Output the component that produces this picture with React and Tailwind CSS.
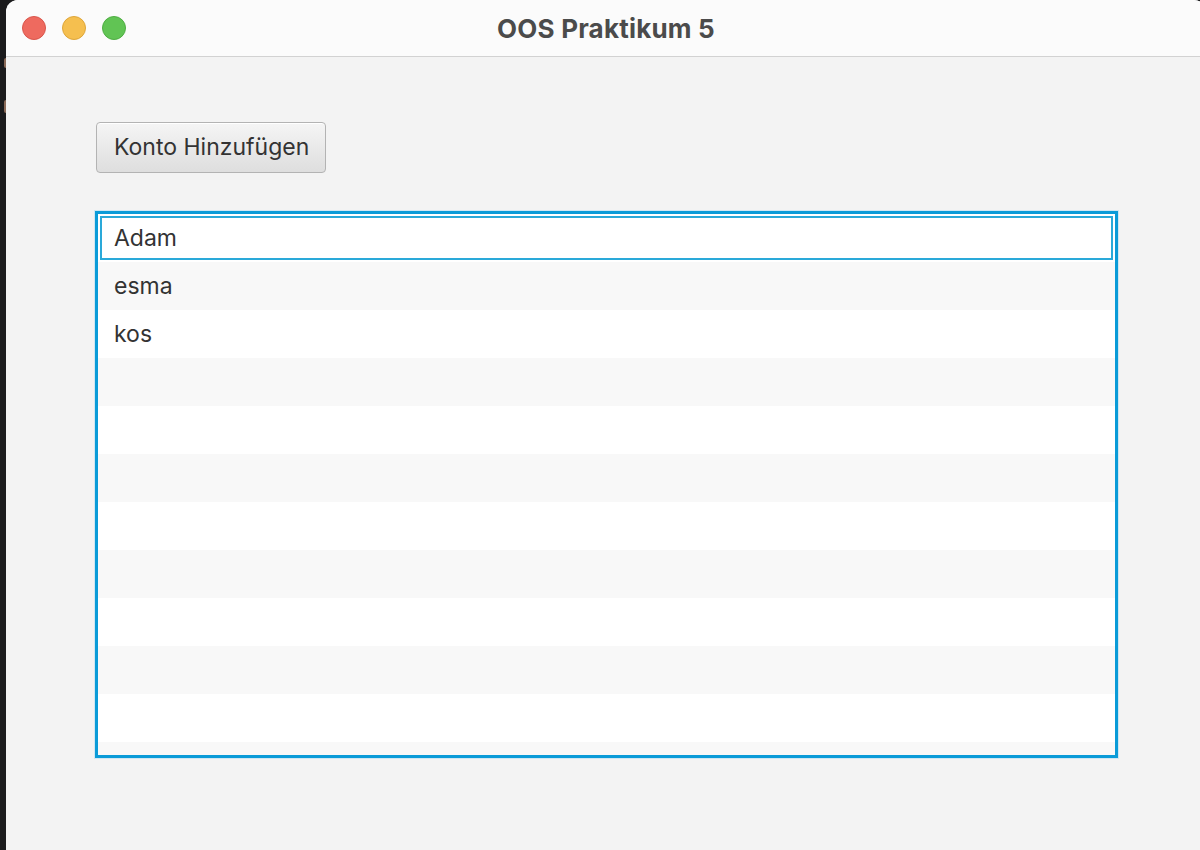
import React from 'react';

const accounts = ['Adam', 'esma', 'kos'];

const App = () => {
  const rows = Array.from({ length: 12 }, (_, i) => accounts[i] || '');

  return (
    <div className="w-[1200px] h-[850px] flex bg-[#1b1b1d] overflow-hidden">
      {/* strip of the desktop behind the window */}
      <div className="w-[6px] shrink-0 flex flex-col">
        <div className="h-[58px]" />
        <div className="h-[10px] w-[2px] ml-[4px] bg-[#8a6a58] rounded-l-sm" />
        <div className="h-[32px]" />
        <div className="h-[13px] w-[2px] ml-[4px] bg-[#8a6a58] rounded-l-sm" />
      </div>

      <div
        className="w-[1200px] shrink-0 h-full flex flex-col rounded-t-[12px] overflow-hidden bg-[#f3f3f3]"
        style={{ fontFamily: 'Inter, "Noto Sans", sans-serif' }}
      >
        {/* title bar */}
        <div className="h-[57px] shrink-0 relative flex items-center justify-center bg-[#fbfbfb] border-b border-[#d2d2d2]">
          <div className="absolute left-[16px] top-[16px] flex gap-[16px]">
            <span className="w-[24px] h-[24px] rounded-full bg-[#ee6a5f] border border-[#d9564c]" />
            <span className="w-[24px] h-[24px] rounded-full bg-[#f5bf4f] border border-[#dea63a]" />
            <span className="w-[24px] h-[24px] rounded-full bg-[#61c454] border border-[#4fae43]" />
          </div>
          <h1 className="text-[26px] font-bold text-[#4b4b4b] tracking-[0.2px]">OOS Praktikum 5</h1>
        </div>

        {/* content */}
        <div className="flex-1 pl-[89px] pr-[82px] pt-[65px]">
          <button className="ml-[1px] h-[51px] pl-[17px] pr-[16px] rounded-[4px] border border-[#b3b3b3] bg-gradient-to-b from-[#f5f5f5] to-[#dedede] text-[23px] text-[#333333] shadow-[inset_0_1px_0_#ffffff]">
            Konto Hinzufügen
          </button>

          <div className="mt-[38px] w-[1023px] h-[547px] border-[3px] border-[#0a9bd8] shadow-[0_0_0_1px_#cfe7f2] bg-white overflow-hidden">
            {rows.map((name, i) => (
              <div
                key={i}
                className={`h-[48px] shrink-0 flex items-center pl-[16px] text-[23px] text-[#333333] ${
                  i % 2 === 0 ? 'bg-white' : 'bg-[#f8f8f8]'
                } ${i === 0 ? 'relative' : ''}`}
              >
                {i === 0 && (
                  <span className="absolute left-[2px] right-[2px] top-[2px] bottom-[2px] border-2 border-[#2aa9d9]" />
                )}
                {name}
              </div>
            ))}
          </div>
        </div>
      </div>
    </div>
  );
};

export default App;
